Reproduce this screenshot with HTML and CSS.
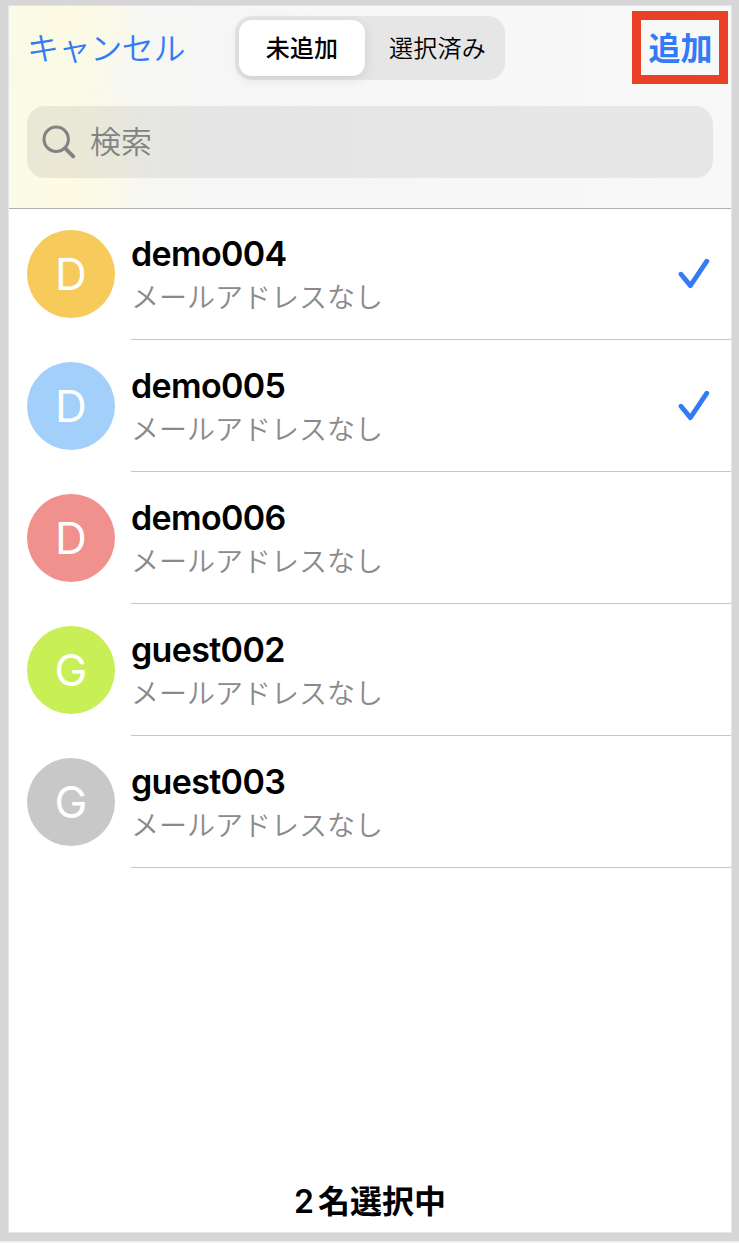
FILE: index.html
```html
<!DOCTYPE html>
<html lang="ja">
  <head>
    <meta charset="UTF-8" />
    <meta name="viewport" content="width=device-width, initial-scale=1.0" />
    <title>メンバーを追加</title>
    <link rel="stylesheet" href="styles.css">
  </head>
  <body>
    <div class="screen">
      <header class="header">
        <div class="toolbar">
          <a class="cancel">キャンセル</a>
          <div class="tabs">
            <div class="tab active"><span>未追加</span></div>
            <div class="tab"><span>選択済み</span></div>
          </div>
          <a class="add"><span>追加</span></a>
        </div>
        <div class="search">
          <svg class="search-icon" width="36" height="36" viewBox="0 0 36 36">
            <circle cx="15.2" cy="15.2" r="12.2" />
            <path d="M24 24.2 L32.2 32.4" />
          </svg>
          <span>検索</span>
        </div>
      </header>

      <ul class="members">
        <li class="member">
          <div class="avatar yellow">D</div>
          <div class="info">
            <div class="text">
              <div class="name">demo004</div>
              <div class="mail">メールアドレスなし</div>
            </div>
            <svg class="check" width="32" height="32" viewBox="0 0 32 32">
              <path d="M3 16.2 L12.4 27.6 L28.8 3.2" />
            </svg>
          </div>
        </li>
        <li class="member">
          <div class="avatar blue">D</div>
          <div class="info">
            <div class="text">
              <div class="name">demo005</div>
              <div class="mail">メールアドレスなし</div>
            </div>
            <svg class="check" width="32" height="32" viewBox="0 0 32 32">
              <path d="M3 16.2 L12.4 27.6 L28.8 3.2" />
            </svg>
          </div>
        </li>
        <li class="member">
          <div class="avatar red">D</div>
          <div class="info">
            <div class="text">
              <div class="name">demo006</div>
              <div class="mail">メールアドレスなし</div>
            </div>
          </div>
        </li>
        <li class="member">
          <div class="avatar green">G</div>
          <div class="info">
            <div class="text">
              <div class="name">guest002</div>
              <div class="mail">メールアドレスなし</div>
            </div>
          </div>
        </li>
        <li class="member">
          <div class="avatar gray">G</div>
          <div class="info">
            <div class="text">
              <div class="name">guest003</div>
              <div class="mail">メールアドレスなし</div>
            </div>
          </div>
        </li>
      </ul>

      <footer class="footer"><span class="count">2</span>名選択中</footer>
    </div>
  </body>
</html>
```

FILE: styles.css
```css
* {
  box-sizing: border-box;
}

body {
  margin: 0;
  height: 1243px;
  padding: 5px 7px 10px 8px;
  background: linear-gradient(#d6d6d6 1241px, #f0f0f0 1241px);
  font-family: Inter, "Noto Sans CJK JP", sans-serif;
  color: #000;
}

.screen {
  display: flex;
  flex-direction: column;
  height: 1228px;
  border: 1px solid #e6e6e6;
  background: #fff;
}

.header {
  height: 203px;
  padding: 5px 3px 0 18px;
  border-bottom: 1px solid #b0b0b1;
  background:
    radial-gradient(ellipse 80px 100px at 60px 0, #fdfbe2, rgba(253, 251, 226, 0)),
    radial-gradient(ellipse 90px 130px at 55px 165px, #fdfbe2, rgba(253, 251, 226, 0)),
    linear-gradient(90deg, #fafae8, #f9f9ea 60px, #f7f7f3 120px, #f6f6f6 190px, #f8f8f8);
}

.toolbar {
  display: flex;
  justify-content: space-between;
  height: 73px;
}

.cancel {
  width: 208px;
  color: #327af6;
  font-size: 32px;
  font-weight: 350;
  letter-spacing: -0.4px;
  line-height: 75px;
}

.tabs {
  display: flex;
  width: 270px;
  height: 64px;
  margin-top: 5px;
  padding: 4px;
  border-radius: 17px;
  background: #e6e6e6;
}

.tab {
  flex: 1;
  font-size: 24px;
  font-weight: 350;
  letter-spacing: 0.2px;
  line-height: 58px;
  text-align: center;
}

.tab:last-child {
  padding-left: 9px;
}

.tab.active {
  flex: 0 0 126px;
  border-radius: 13px;
  background: #fff;
  box-shadow: 0 3px 12px rgba(0, 0, 0, 0.1);
  font-weight: 500;
}

.add {
  width: 96px;
  height: 73px;
  margin-left: auto;
  padding-left: 1px;
  border: 9px solid #ea4026;
  color: #327af6;
  font-size: 32px;
  font-weight: 700;
  line-height: 57px;
  text-align: center;
}

.search {
  display: flex;
  align-items: center;
  width: 686px;
  height: 72px;
  margin-top: 22px;
  padding-left: 14px;
  border-radius: 18px;
  background: rgba(118, 118, 118, 0.13);
  color: #828284;
  font-size: 31px;
  font-weight: 350;
}

.search span {
  margin: 0 0 5px 13px;
}

.search-icon {
  fill: none;
  stroke: #828284;
  stroke-width: 3;
  stroke-linecap: round;
}

.search-icon path {
  stroke-width: 4;
}

.members {
  margin: 0;
  padding: 0;
  list-style: none;
}

.member {
  display: flex;
  height: 132px;
  padding-left: 18px;
}

.member:first-child {
  height: 131px;
}

.avatar {
  width: 88px;
  height: 88px;
  margin-top: 22px;
  border-radius: 50%;
  color: #fff;
  font-size: 44px;
  line-height: 88px;
  text-align: center;
}

.member:first-child .avatar {
  margin-top: 21px;
}

.yellow {
  background: #f6ca5b;
}

.blue {
  background: #a3d0fb;
}

.red {
  background: #f0918d;
}

.green {
  background: #c8ef55;
}

.gray {
  background: #c8c8c8;
}

.info {
  display: flex;
  flex: 1;
  align-items: flex-end;
  justify-content: space-between;
  margin-left: 16px;
  padding-right: 21px;
  border-bottom: 1px solid #c6c6c8;
}

.text {
  height: 108px;
}

.name {
  font-size: 34px;
  font-weight: 600;
  letter-spacing: -0.65px;
  line-height: 45px;
}

.mail {
  color: #8a8a8d;
  font-size: 28px;
  font-weight: 350;
  line-height: 44px;
}

.check {
  margin-bottom: 49px;
  fill: none;
  stroke: #327af6;
  stroke-width: 4.8;
  stroke-linecap: round;
  stroke-linejoin: round;
}

.footer {
  margin-top: auto;
  padding-bottom: 8px;
  font-size: 32px;
  font-weight: 600;
  line-height: 44px;
  text-align: center;
}

.count {
  margin-right: 4px;
}
```
